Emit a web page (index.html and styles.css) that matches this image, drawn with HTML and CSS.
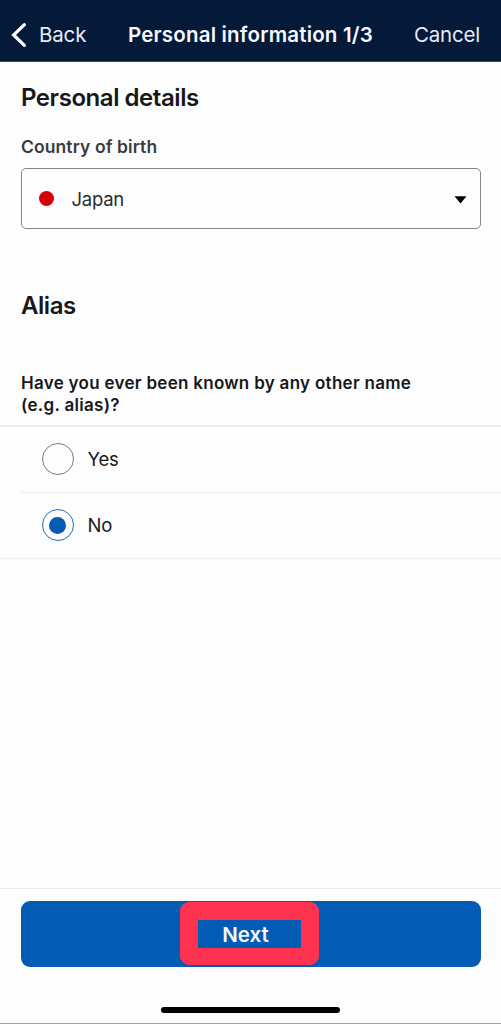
FILE: index.html
```html
<!DOCTYPE html>
<html lang="en">
<head>
<meta charset="utf-8">
<title>Personal information</title>
<link rel="stylesheet" href="styles.css">
</head>
<body>
<div class="screen">
  <header class="nav">
    <a class="back"><svg class="chevron" width="16" height="26" viewBox="0 0 16 26"><path d="M13.4 2.6 2.6 13l10.8 10.4" fill="none" stroke="#fff" stroke-width="3.2" stroke-linecap="round"/></svg><span class="back-text">Back</span></a>
    <h1 class="nav-title">Personal information 1/3</h1>
    <a class="cancel">Cancel</a>
  </header>
  <main class="content">
    <h2 class="heading">Personal details</h2>
    <div class="label"><span>Country of birth</span></div>
    <div class="select">
      <span class="flag"></span>
      <span class="country">Japan</span>
      <svg class="caret" width="13" height="8" viewBox="0 0 13 8"><path d="M.5.3h12L6.5 7.6Z" fill="#000"/></svg>
    </div>
    <h2 class="heading alias">Alias</h2>
    <p class="question"><span class="line-one">Have you ever been known by any other name</span><br><span class="line-two">(e.g. alias)?</span></p>
    <div class="options">
      <div class="option"><span class="radio"></span><span class="yes">Yes</span></div>
      <div class="divider"></div>
      <div class="option"><span class="radio selected"></span><span class="no">No</span></div>
    </div>
  </main>
  <footer class="footer">
    <div class="button"><span class="highlight"><span class="next">Next</span></span></div>
    <div class="home"></div>
  </footer>
</div>
</body>
</html>
```
FILE: styles.css
```css
* { box-sizing: border-box; }
body {
  margin: 0;
  background: #fdfdfd;
  font-family: Inter, "Liberation Sans", sans-serif;
  color: #17181b;
}
h1, h2, p { margin: 0; }
.screen {
  display: flex;
  flex-direction: column;
  height: 1024px;
  border-bottom: 1px solid #a0a0a0;
}
.nav {
  display: flex;
  align-items: center;
  justify-content: space-between;
  height: 62px;
  padding: 8px 21px 0 11px;
  background: #051a38;
  border-bottom: 1px solid #3b4460;
  color: #e4ebfa;
  font-size: 20.5px;
  line-height: 28px;
  white-space: nowrap;
}
.back { display: flex; align-items: center; gap: 12px; width: 117px; }
.back-text { letter-spacing: -0.15px; }
.nav-title {
  flex: 1;
  font-size: 20.5px;
  font-weight: 600;
  color: #f5f8ff;
  letter-spacing: 0.18px;
}
.cancel { letter-spacing: -0.2px; }
.content { display: flex; flex-direction: column; flex: 1; }
.heading {
  margin: 21px 0 0 21px;
  font-size: 24px;
  line-height: 30px;
  font-weight: 600;
  letter-spacing: -0.45px;
}
.label {
  margin: 22px 0 0 21px;
  font-size: 17.5px;
  line-height: 24px;
  font-weight: 600;
  color: #3b3c40;
  letter-spacing: 0.1px;
}
.select {
  display: flex;
  align-items: center;
  height: 61px;
  margin: 9px 20.5px 0 20.5px;
  padding: 0 13px 0 17px;
  border: 1.5px solid #858585;
  border-radius: 5px;
  font-size: 18.5px;
  color: #2b2c2f;
}
.flag { width: 15px; height: 15px; border-radius: 50%; background: #d80008; }
.country { margin-left: 18px; flex: 1; letter-spacing: -0.25px; }
.caret { margin-top: 2px; }
.alias { margin-top: 62px; }
.question {
  margin: 52px 0 0 21px;
  font-size: 17px;
  line-height: 21.5px;
  font-weight: 600;
  letter-spacing: 0.29px;
  white-space: nowrap;
}
.options { margin-top: 9px; border-top: 2px solid #ededee; border-bottom: 1px solid #ececed; }
.option {
  display: flex;
  align-items: center;
  gap: 14px;
  height: 65px;
  padding: 0 0 1px 41.5px;
  font-size: 18.5px;
  letter-spacing: -0.2px;
}
.divider { height: 1px; margin-left: 21px; background: #ececed; }
.radio {
  display: flex;
  align-items: center;
  justify-content: center;
  width: 32px;
  height: 32px;
  border: 1.4px solid #7c7c7c;
  border-radius: 50%;
}
.radio.selected { border-color: #2b6cb3; }
.radio.selected::after {
  content: "";
  width: 17px;
  height: 17px;
  border-radius: 50%;
  background: #055ab5;
}
.footer {
  display: flex;
  flex-direction: column;
  align-items: center;
  height: 135px;
  padding-top: 12px;
  border-top: 1px solid #ececed;
}
.button {
  display: flex;
  justify-content: center;
  width: 460px;
  height: 66px;
  padding-top: 1px;
  border-radius: 9px;
  background: #035bb3;
}
.highlight {
  display: flex;
  align-items: center;
  justify-content: center;
  width: 139px;
  height: 63px;
  margin-right: 2px;
  padding: 1px 8px 0 0;
  border: 18px solid #ff334f;
  border-bottom-width: 17px;
  border-radius: 9px;
  color: #f4f9ff;
  font-size: 20.5px;
  font-weight: 600;
  line-height: 26px;
}
.home { width: 179px; height: 6px; margin-top: 40px; border-radius: 3px; background: #000; }
```
